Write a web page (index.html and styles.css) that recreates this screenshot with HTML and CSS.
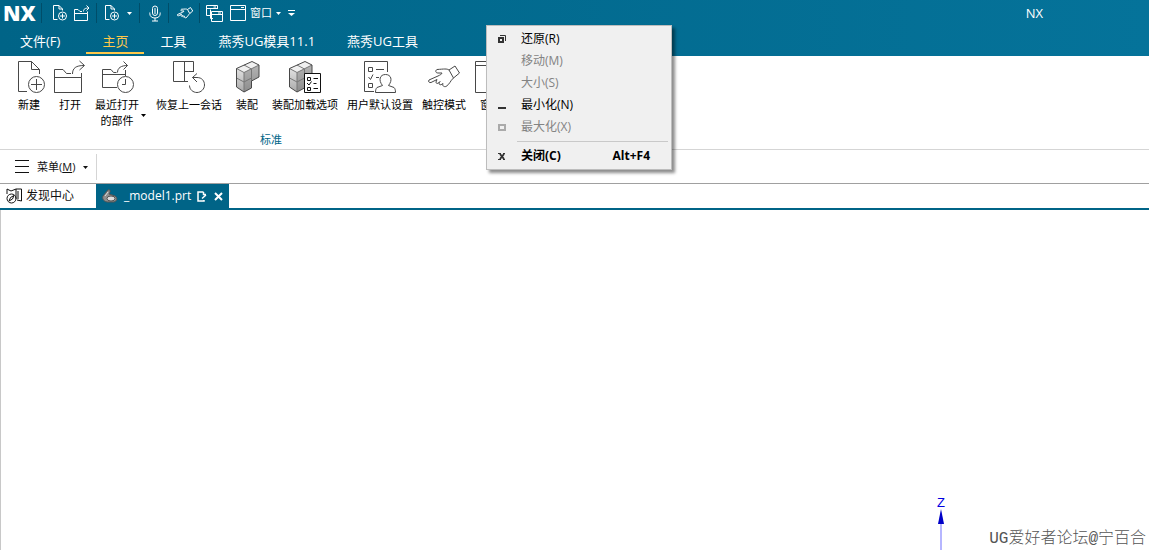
FILE: index.html
```html
<!DOCTYPE html>
<html lang="zh-CN">
<head>
<meta charset="utf-8">
<title>NX</title>
<link rel="stylesheet" href="styles.css">
</head>
<body>
<svg class="defs" aria-hidden="true">
  <linearGradient id="g-front" x1="0" y1="0" x2="0" y2="1"><stop offset="0" stop-color="#e2e2e2"/><stop offset="1" stop-color="#a8a8a8"/></linearGradient>
  <linearGradient id="g-side" x1="0" y1="0" x2="0" y2="1"><stop offset="0" stop-color="#b4b4b4"/><stop offset="1" stop-color="#8c8c8c"/></linearGradient>
  <symbol id="i-new" viewBox="0 0 32 34"><path d="M14 31.500H5.500V1.500H18.500L26.500 9.500V14M18.500 1.500V9.500H26.500"/><circle cx="23.500" cy="24.500" r="8"/><path d="M18 24.500H29M23.500 19V30"/></symbol>
  <symbol id="i-new-small" viewBox="0 0 14 16"><path d="M4.500 14.500H.5V.5H6L9.500 4V5.500M6 .5V4H9.500"/><circle cx="9.500" cy="11" r="4"/><path d="M7 11H12M9.500 8.500V13.500"/></symbol>
  <symbol id="i-open" viewBox="0 0 32 34"><path d="M.5 32.500V9.500H9L12.500 13.500H17M.5 17.500H27.500V32.500H.5ZM27.500 17.500V13M18.500 14C18.500 8 22 5.500 30 5.500M25.500 1L30.500 5.500L25.500 10"/></symbol>
  <symbol id="i-hand" viewBox="0 0 32 34"><path d="M21 10L27 6L31.500 13L25.500 18ZM21 10C19 8.500 16 9 9 9.500C7 10.500 7.500 13 10 13H14C14 14 12 15 10 16L1 20C0 21.500 1 23 3 22.500L9 19.500M9 19.500L8 22C8 24 10 24 12 21.500M12 21.500C10 24.500 12 26 15 23.500M15 23.500C14 26 16 27 18 26.500C22 24 22 21 25.500 18"/></symbol>
  <symbol id="i-cubes" viewBox="0 0 32 34">
    <path fill="url(#g-front)" stroke="none" d="M5.500 8.500L13 12.500V32L5.500 27Z"/>
    <path fill="#f0f0f0" stroke="none" d="M5.500 8.500L21 1.500L28 5L13 12.500Z"/>
    <path fill="url(#g-side)" stroke="none" d="M13 12.500L28 5V17L20.500 21V28L13 32Z"/>
    <path stroke="#777" d="M5.500 8.500L13 12.500L28 5M13 12.500V32M5.500 18L13 22L20.500 18M13 5L20.500 9V21"/>
    <path d="M5.500 8.500L21 1.500L28 5V17L20.500 21V28L13 32L5.500 27Z"/>
  </symbol>
  <symbol id="i-caret" viewBox="0 0 5 3"><path d="M0 0H5L2.500 3Z" fill="currentColor" stroke="none"/></symbol>
</svg>

<header class="header">
  <div class="titlebar">
    <strong class="logo">NX</strong>
    <div class="quick">
      <div class="group first">
        <button class="tool" aria-label="新建"><svg width="14" height="16"><use href="#i-new-small"/></svg></button>
        <button class="tool" aria-label="打开"><svg width="16" height="17" viewBox="0 0 16 17"><path d="M.5 15.500V4.500H4L6 6.500H8M.5 8.500H13.500V15.500H.5ZM13.500 8.500V6.500M9.500 6.500C9.500 4 11 3 15 3M12.500 .5L15 3L12.500 5.500"/></svg></button>
      </div>
      <div class="group">
        <button class="tool" aria-label="新建部件"><svg width="14" height="16"><use href="#i-new-small"/></svg></button>
        <button class="tool tool-caret" aria-label="更多"><svg class="caret"><use href="#i-caret"/></svg></button>
      </div>
      <div class="group wide">
        <button class="tool" aria-label="语音"><svg width="14" height="17" viewBox="-1 0 14 17"><rect x="3.500" y="1" width="5" height="9.500" rx="2.500"/><path d="M5 4H7M5 6H7M5 8H7M.8 7.500V8.500C.8 11.500 3 13 6 13S11.200 11.500 11.200 8.500V7.500M6 13V16M3 16H9"/></svg></button>
      </div>
      <div class="group">
        <button class="tool" aria-label="触控模式"><svg width="16" height="18" class="hand"><use href="#i-hand"/></svg></button>
      </div>
      <div class="group last">
        <button class="tool" aria-label="切换窗口"><svg width="17" height="17" viewBox="0 0 17 17"><path d="M4 10.500H.5V.5H11.500V4M.5 3.500H11.500M7 13.500H4.500V4.500M7.500 2H10"/><path d="M5.500 6.500H16.500V16.500H5.500ZM5.500 9.500H16.500M12 8H15"/></svg></button>
        <button class="tool window-tool"><svg width="16" height="17" viewBox="0 0 16 17"><path d="M.5 .5H15.500V15.500H.5ZM.5 4.500H15.500M11 2.500H14"/></svg>窗口<svg class="caret"><use href="#i-caret"/></svg></button>
        <button class="tool" aria-label="自定义工具条"><svg width="7" height="6" viewBox="0 0 7 6"><path d="M0 .5H7"/><path d="M0 3H7L3.500 6Z" fill="currentColor" stroke="none"/></svg></button>
      </div>
    </div>
    <span class="app-name">NX</span>
  </div>
  <nav class="tabs">
    <button class="tab file-tab">文件(F)</button>
    <button class="tab active">主页</button>
    <button class="tab">工具</button>
    <button class="tab">燕秀UG模具11.1</button>
    <button class="tab">燕秀UG工具</button>
  </nav>
</header>

<section class="ribbon">
  <div class="commands">
    <button class="command"><svg class="icon"><use href="#i-new"/></svg><span>新建</span></button>
    <button class="command"><svg class="icon"><use href="#i-open"/></svg><span>打开</span></button>
    <button class="command with-caret"><svg class="icon" viewBox="-2 0 34 34"><path d="M15 27.500H.5V9.500H9L11.500 12.500H14.500M.5 14.500H23.500M23.500 10V16M15.500 12.500C15.500 8 19 5.500 25.500 5.500M21.500 1.500L25.500 5.500L21.500 9.500"/><circle cx="23.500" cy="24.500" r="8"/><path d="M23.500 19V24.500H20"/></svg><span>最近打开<br>的部件</span><svg class="caret"><use href="#i-caret"/></svg></button>
    <button class="command"><svg class="icon" viewBox="0 0 32 34"><path d="M15 21.500H.5V1.500H20.500V12M11.500 1.500V21.500M11.500 11.500H20.500M24 13.500L19.500 17.500L24 22M19.500 17.500H24C29 17.500 31.500 21 31.500 25C31.500 29 28 32.500 24 32.500C20 32.500 16.500 29.500 16.500 25.500"/></svg><span>恢复上一会话</span></button>
    <button class="command"><svg class="icon"><use href="#i-cubes"/></svg><span>装配</span></button>
    <button class="command"><svg class="icon" viewBox="0 0 32 34"><g transform="translate(-5)"><use href="#i-cubes" width="32" height="34"/></g><path fill="#fff" stroke="#111" d="M15.500 13.500H31.500V32.500H15.500Z"/><path stroke="#111" d="M18.500 17.500H21.500V20.500H18.500ZM18.500 27.500H21.500V30.500H18.500ZM24.500 18.500H29M24.500 23.500H27.500M24.500 28.500H29M18 23L20 25L22.500 21.500"/></svg><span>装配加载选项</span></button>
    <button class="command"><svg class="icon" viewBox="0 0 32 34"><path d="M10 31.500H.5V1.500H23.500V12M4.500 7.500H8.500V11.500H4.500ZM4.500 23.500H8.500V27.500H4.500ZM12 9.500H20M4.500 17L6.500 19.500L9 14.500M12 17.500H15"/><path fill="#fff" d="M18.500 25.500C14 20 16 14.500 21.500 14.500S29 20 24.500 25.500L30 27.500C31 28.500 31.500 30 31.500 32.500H11.500C11.500 30 12 28.500 13 27.500Z"/></svg><span>用户默认设置</span></button>
    <button class="command"><svg class="icon"><use href="#i-hand"/></svg><span>触控模式</span></button>
    <button class="command"><svg class="icon" viewBox="0 0 32 34"><path d="M.5 1.500H31.500V32.500H.5ZM.5 5.500H31.500"/></svg><span>窗口</span></button>
  </div>
  <div class="group-title">标准</div>
</section>

<div class="menubar">
  <button class="main-menu"><svg width="14" height="14" viewBox="0 0 14 14"><path d="M0 .5H14M0 6.500H14M0 12.500H14"/></svg><span>菜单(<u>M</u>)</span><svg class="caret"><use href="#i-caret"/></svg></button>
</div>

<div class="documents">
  <button class="document"><svg width="17" height="16" viewBox="0 0 17 16"><path d="M1 6V1L5 3L10 1V11M10 1L15.500 1V13L11 12M12 3V11"/><circle cx="5.500" cy="10.500" r="4.500"/><path d="M3 13L4.500 9.500L8 7.500L6.500 11Z"/></svg>发现中心</button>
  <div class="document current">
    <svg width="16" height="14" viewBox="0 0 16 14" aria-hidden="true"><path fill="#8d8d8d" stroke="#555" d="M1 7L6 1C8 0 9 2 7 5L13 7C16 9 15 12 12 13H5C1 12 0 9 1 7Z"/><ellipse cx="9" cy="9.500" rx="4" ry="2.500" fill="#ddd" stroke="#555"/><path stroke="#ddd" d="M3 7L6 3"/></svg>
    <span>_model1.prt</span>
    <svg class="modified" width="10" height="11" viewBox="0 0 10 11" aria-hidden="true"><path stroke-width="1.500" d="M6.500 1H1V10H7V9M6.500 1V3.500H9M5 7.500L9 4"/></svg>
    <button class="close" aria-label="关闭"><svg width="9" height="9" viewBox="0 0 9 9"><path stroke-width="2" d="M1 1L8 8M8 1L1 8"/></svg></button>
  </div>
</div>

<main class="viewport">
  <svg class="axis" width="16" height="54" viewBox="0 0 16 54" role="img" aria-label="Z 轴"><text x="8" y="11" text-anchor="middle">Z</text><path d="M8 28V54" stroke="#b6b6ff" stroke-width="2"/><path d="M8 13L11 28H5Z" fill="#0000c8" stroke="none"/></svg>
  <span class="credit">UG爱好者论坛@宁百合</span>
</main>

<div class="context-menu" role="menu">
  <button class="menu-item" role="menuitem"><svg class="mark" viewBox="0 0 8 8"><path d="M2 .5H7.500V6"/><path stroke-width="2" d="M1 3H5V7H1Z"/></svg><span>还原(R)</span></button>
  <button class="menu-item" role="menuitem" disabled><span class="mark"></span><span>移动(M)</span></button>
  <button class="menu-item" role="menuitem" disabled><span class="mark"></span><span>大小(S)</span></button>
  <button class="menu-item" role="menuitem"><svg class="mark" viewBox="0 0 8 8"><path stroke-width="2" d="M0 7H8"/></svg><span>最小化(N)</span></button>
  <button class="menu-item" role="menuitem" disabled><svg class="mark" viewBox="0 0 8 8"><path stroke-width="2" d="M1 2H7V7H1Z"/></svg><span>最大化(X)</span></button>
  <hr class="divider">
  <button class="menu-item strong" role="menuitem"><svg class="mark" viewBox="0 0 8 8"><path stroke-width="2" d="M2 2L6 7M6 2L2 7"/><path d="M0 1.500H3M5 1.500H7M0 7.500H3M5 7.500H7"/></svg><span>关闭(C)</span><span class="shortcut">Alt+F4</span></button>
</div>
</body>
</html>
```

FILE: styles.css
```css
* { box-sizing: border-box; }

body {
  margin: 0;
  min-height: 100vh;
  display: flex;
  flex-direction: column;
  overflow: hidden;
  background: #fff;
  color: #111;
  font: 12px/16px "Open Sans", "Noto Sans CJK SC", sans-serif;
}

button {
  margin: 0;
  padding: 0;
  border: 0;
  background: none;
  color: inherit;
  font: inherit;
  white-space: nowrap;
}

svg { display: block; flex: none; fill: none; stroke: currentColor; }
.defs { position: absolute; width: 0; height: 0; }
.caret { width: 5px; height: 3px; }

.header {
  background: linear-gradient(90deg, #006487, #05739a);
  color: #fff;
}

.titlebar { display: flex; align-items: center; height: 26px; padding-left: 3px; }
.logo { width: 38px; font-size: 21px; font-weight: 800; line-height: 26px; }
.quick { display: flex; flex: 1; }
.group {
  display: flex;
  align-items: center;
  gap: 7px;
  height: 20px;
  padding: 0 6px 0 8px;
  border-left: 1px solid #004d69;
}
.group.first { padding-left: 11px; }
.group.last { padding-left: 6px; }
.tool { display: flex; align-items: center; }
.hand { stroke-width: 2; }
.window-tool { gap: 4px; font-size: 11px; }
.tool-caret { padding: 0 1px; }
.app-name { padding-right: 106px; font-size: 13px; }

.tabs { display: flex; height: 30px; padding: 0 4px 2px; font-size: 13px; }
.tab { padding: 3px 16px 0; border-bottom: 2px solid transparent; }
.file-tab { margin-right: 10px; }
.tab.active { border-color: #ffc84a; color: #ffc84a; }

.ribbon { height: 94px; padding-top: 4px; border-bottom: 1px solid #d5d5d5; }
.commands { display: flex; align-items: flex-start; gap: 9px; height: 72px; padding-left: 13px; }
.command {
  display: flex;
  flex-direction: column;
  align-items: center;
  min-width: 32px;
  gap: 3px;
  color: #000;
  font-size: 11px;
}
.command .icon { width: 32px; height: 34px; color: #484848; }
.with-caret { position: relative; padding-right: 8px; }
.with-caret .icon { width: 34px; }
.with-caret .caret { position: absolute; right: 1px; bottom: 12px; }
.group-title { width: 542px; color: #006487; font-size: 11px; text-align: center; }

.menubar { display: flex; height: 34px; padding: 4px 0 3px 15px; border-bottom: 1px solid #a0a0a0; }
.main-menu {
  display: flex;
  align-items: center;
  gap: 8px;
  padding-right: 8px;
  border-right: 1px solid #d5d5d5;
  font-size: 11px;
}

.documents { display: flex; height: 26px; border-bottom: 2px solid #006487; }
.document { display: flex; align-items: center; width: 96px; padding-left: 6px; gap: 3px; }
.document.current {
  width: auto;
  padding: 0 6px;
  gap: 6px;
  background: #006487;
  color: #fff;
}
.close { padding-left: 1px; }

.viewport { position: relative; flex: 1; border-left: 1px solid #c8c8c8; }
.axis { position: absolute; right: 200px; bottom: 0; }
.axis text { fill: #0000e0; stroke: none; font: 13px "Liberation Sans", sans-serif; }
.credit {
  position: absolute;
  right: 3px;
  bottom: 1px;
  color: #555;
  font: 300 16px/20px "Liberation Mono", "Noto Sans CJK SC", monospace;
}

.context-menu {
  position: absolute;
  left: 486px;
  top: 25px;
  width: 186px;
  padding: 2px;
  border: 1px solid #bdbdbd;
  background: #f0f0f0;
  box-shadow: 3px 3px 3px rgba(0, 0, 0, 0.45);
}
.menu-item {
  display: flex;
  align-items: center;
  width: 100%;
  height: 22px;
  padding: 0 19px 0 9px;
  gap: 15px;
  color: #000;
}
.menu-item:disabled { color: #838383; }
.mark { width: 8px; height: 8px; color: #333; }
.menu-item:disabled .mark { color: #aaa; }
.divider { margin: 3px 1px 3px 28px; border: 0; border-top: 1px solid #c9c9c9; }
.strong { font-weight: 700; }
.shortcut { margin-left: auto; }
```
